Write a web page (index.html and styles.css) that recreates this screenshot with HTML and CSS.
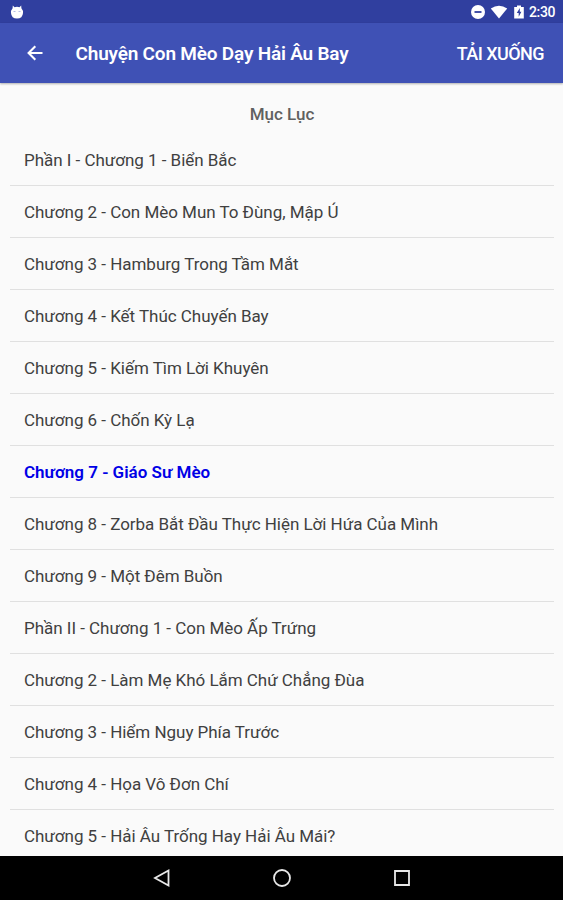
FILE: index.html
```html
<!DOCTYPE html>
<html lang="vi">
<head>
<meta charset="utf-8">
<title>Chuyện Con Mèo Dạy Hải Âu Bay</title>
<link rel="stylesheet" href="styles.css">
</head>
<body>
<div class="status">
  <svg class="droid" width="14" height="15" viewBox="0 0 14 15"><path fill="#fff" d="M2.800 0.500L4.500 2.300Q7 1.400 9.500 2.300L11.200 0.500L11.400 3.300Q13.300 5.500 13 8Q12.600 13.500 7 13.500Q1.400 13.500 1 8Q0.700 5.500 2.600 3.300Z"/><path d="M3.500 6.500h2M8.500 6.500h2" stroke="#b5bce5"/></svg>
  <div class="status-right">
    <svg width="14" height="14" viewBox="0 0 14 14"><circle cx="7" cy="7" r="7" fill="#fff"/><path d="M3.500 7h7" stroke="#303f9f" stroke-width="1.800"/></svg>
    <svg class="wifi" width="18" height="14" viewBox="0 0 18 14"><path fill="#fff" d="M0.800 3.500Q9 -1.800 17.200 3.500L9 13.500Z"/></svg>
    <svg class="battery" width="10" height="14" viewBox="0 0 10 14"><path fill="#fff" d="M3 0.500h4V2h2.800v11.500H0.200V2H3z"/><path fill="#303f9f" d="M5.800 3L2.800 8h1.900v3.700L7.400 6.700H5.800z"/></svg>
    <span class="clock">2:30</span>
  </div>
</div>
<header class="toolbar">
  <svg class="back" width="16" height="16" viewBox="0 0 16 16"><path d="M15.500 8H2M8.300 1.300L1.600 8l6.700 6.700" fill="none" stroke="#fff" stroke-width="2.100"/></svg>
  <h1>Chuyện Con Mèo Dạy Hải Âu Bay</h1>
  <span class="download">TẢI XUỐNG</span>
</header>
<main>
  <h2>Mục Lục</h2>
  <ul>
    <li><span>Phần I - Chương 1 - Biển Bắc</span></li>
    <li><span>Chương 2 - Con Mèo Mun To Đùng, Mập Ú</span></li>
    <li><span>Chương 3 - Hamburg Trong Tầm Mắt</span></li>
    <li><span>Chương 4 - Kết Thúc Chuyến Bay</span></li>
    <li><span>Chương 5 - Kiếm Tìm Lời Khuyên</span></li>
    <li><span>Chương 6 - Chốn Kỳ Lạ</span></li>
    <li class="current"><span>Chương 7 - Giáo Sư Mèo</span></li>
    <li><span>Chương 8 - Zorba Bắt Đầu Thực Hiện Lời Hứa Của Mình</span></li>
    <li><span>Chương 9 - Một Đêm Buồn</span></li>
    <li><span>Phần II - Chương 1 - Con Mèo Ấp Trứng</span></li>
    <li><span>Chương 2 - Làm Mẹ Khó Lắm Chứ Chẳng Đùa</span></li>
    <li><span>Chương 3 - Hiểm Nguy Phía Trước</span></li>
    <li><span>Chương 4 - Họa Vô Đơn Chí</span></li>
    <li><span>Chương 5 - Hải Âu Trống Hay Hải Âu Mái?</span></li>
  </ul>
</main>
<nav>
  <svg width="20" height="20" viewBox="0 0 20 20"><path d="M16.500 2.500v15L3 10z"/></svg>
  <svg width="20" height="20" viewBox="0 0 20 20"><circle cx="10" cy="10" r="8"/></svg>
  <svg width="20" height="20" viewBox="0 0 20 20"><path d="M3 3h14v14H3z"/></svg>
</nav>
</body>
</html>
```

FILE: styles.css
```css
* { box-sizing: border-box; }
body { margin: 0; width: 563px; height: 900px; overflow: hidden; display: flex; flex-direction: column; background: #fafafa; color: #404040; font-family: Roboto, "Noto Sans", sans-serif; }
.status { flex: none; height: 23px; padding: 1px 8px 0 10px; display: flex; align-items: center; justify-content: space-between; background: #303f9f; color: #fff; }
.status-right { display: flex; align-items: center; }
.wifi { margin-left: 5px; }
.battery { margin-left: 6px; }
.clock { margin-left: 5px; font-size: 14px; line-height: 22px; font-weight: 500; letter-spacing: -.4px; }
.toolbar { flex: none; height: 60px; padding: 0 19px 0 26.5px; display: flex; align-items: center; background: #3f51b5; color: #fff; box-shadow: 0 1px 2px rgba(0, 0, 0, .3); z-index: 1; }
h1 { margin: 2px auto 0 33px; font-size: 19px; font-weight: 600; line-height: 24px; letter-spacing: -.2px; white-space: nowrap; }
.download { margin-top: 1px; font-size: 18px; font-weight: 500; letter-spacing: -.55px; white-space: nowrap; }
main { flex: 1; min-height: 0; overflow: hidden; padding: 0 9px 0 10px; }
h2 { margin: 20px 0 8px; text-align: center; font-size: 17px; line-height: 23px; font-weight: 500; color: #606060; }
ul { margin: 0; padding: 0; list-style: none; }
li { height: 52px; padding: 0 14px; line-height: 53px; font-size: 17px; letter-spacing: -.03px; white-space: nowrap; border-bottom: 1px solid #e0e0e0; }
.current { color: #0000e6; font-weight: 600; letter-spacing: 0; }
nav { flex: none; height: 44px; background: #000; display: flex; justify-content: center; align-items: center; gap: 100px; }
nav svg { fill: none; stroke: #e8e8e8; stroke-width: 1.800; }
```
